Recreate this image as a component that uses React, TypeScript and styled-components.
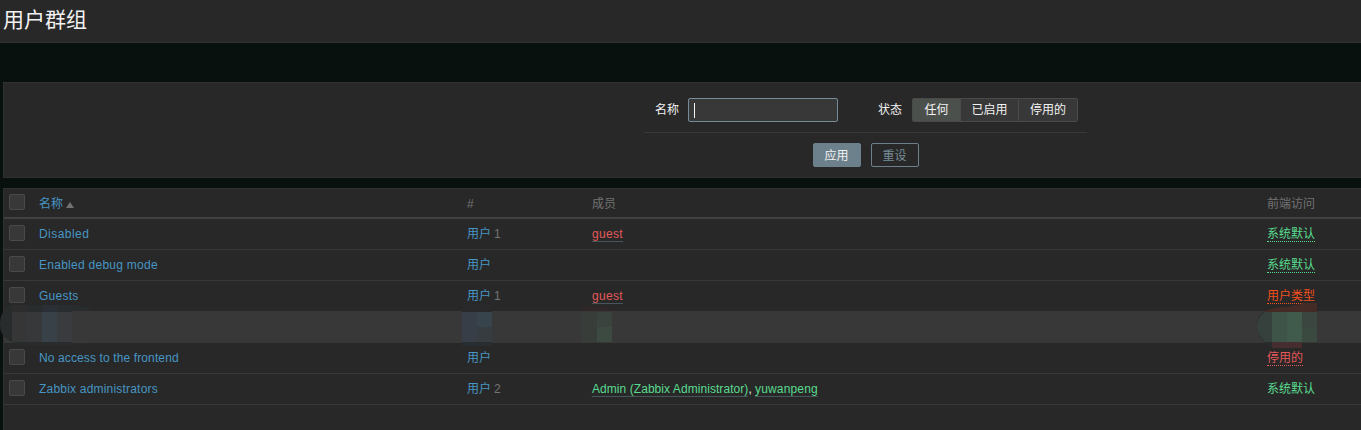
import React from 'react';
import styled, { createGlobalStyle } from 'styled-components';

const GlobalStyle = createGlobalStyle`
  * { box-sizing: border-box; }
  body {
    margin: 0;
    background: #09110f;
    color: #f2f2f2;
    font: 12px/14px "Liberation Sans", "Noto Sans CJK SC", sans-serif;
    overflow: hidden;
  }
`;

const Viewport = styled.div`
  height: 430px;
  overflow: hidden;
`;

const Page = styled.div`
  width: 1727px;
`;

const Header = styled.header`
  height: 43px;
  padding: 6px 3px;
  background: #282828;
  border-bottom: 1px solid #303030;
`;

const Title = styled.h1`
  margin: 0;
  font-size: 21px;
  font-weight: 400;
  line-height: 28px;
`;

const Filter = styled.form`
  display: flex;
  flex-direction: column;
  align-items: center;
  height: 96px;
  margin: 39px 0 0 3px;
  padding: 15px 0 0 0;
  background: #282828;
  border: solid #303030;
  border-width: 1px 0 1px 1px;
`;

const Fields = styled.div`
  display: flex;
  width: 443px;
  height: 35px;
  padding-left: 11px;
  border-bottom: 1px solid #383838;
`;

const Label = styled.span<{ $width: number }>`
  width: ${p => p.$width}px;
  line-height: 25px;
`;

const TextField = styled.div`
  width: 150px;
  height: 24px;
  margin-right: 40px;
  padding: 4px 5px;
  background: #383838;
  border: 1px solid #768d99;
  border-radius: 2px;
`;

const Caret = styled.div`
  width: 1px;
  height: 15px;
  background: #f2f2f2;
`;

const Segments = styled.div`
  display: flex;
  height: 24px;
  background: #383838;
  border: 1px solid #4a4a4a;
  border-radius: 2px;
`;

const Segment = styled.span<{ $width: number; $active?: boolean }>`
  width: ${p => p.$width}px;
  line-height: 23px;
  text-align: center;
  background: ${p => (p.$active ? '#4c504c' : 'transparent')};
  & + & { border-left: 1px solid #4a4a4a; }
`;

const Actions = styled.div`
  display: flex;
  gap: 10px;
  padding-top: 10px;
`;

const Button = styled.button<{ $primary?: boolean }>`
  width: 48px;
  height: 24px;
  padding: 1px 0 0;
  font: inherit;
  color: ${p => (p.$primary ? '#f2f2f2' : '#768d99')};
  background: ${p => (p.$primary ? '#6c818b' : 'transparent')};
  border: 1px solid ${p => (p.$primary ? '#6c818b' : '#6c818b')};
  border-radius: 2px;
`;

const Table = styled.div`
  height: 260px;
  margin: 10px 0 0 3px;
  background: #282828;
  border: solid #303030;
  border-width: 1px 0 0 1px;
`;

const Row = styled.div<{ $head?: boolean; $masked?: boolean }>`
  position: relative;
  display: grid;
  grid-template-columns: 30px 428px 125px 675px 1fr;
  height: ${p => (p.$head ? 30 : 31)}px;
  color: ${p => (p.$head ? '#737373' : '#f2f2f2')};
  background: ${p => (p.$masked ? '#383838' : 'transparent')};
  border-bottom: ${p => (p.$head ? '2px solid #414141' : '1px solid #383838')};
`;

const Cell = styled.div`
  padding: 8px 0 0 5px;
  white-space: nowrap;
`;

const Checkbox = styled.div<{ $head?: boolean }>`
  width: 16px;
  height: 16px;
  margin-top: ${p => (p.$head ? -3 : -2)}px;
  background: #383838;
  border: 1px solid #4a4a4a;
  border-radius: 2px;
`;

const Link = styled.a<{ $spacing?: number }>`
  color: #4796c4;
  letter-spacing: ${p => p.$spacing ?? 0}px;
`;

const Count = styled.span`
  margin-left: 3px;
  color: #737373;
`;

const Member = styled.a<{ $color: string; $spacing: number }>`
  display: inline-block;
  height: 15px;
  color: ${p => p.$color};
  letter-spacing: ${p => p.$spacing}px;
  border-bottom: 1px solid #48565b;
`;

const Access = styled.a<{ $color: string; $plain?: boolean }>`
  display: inline-block;
  height: 15px;
  color: ${p => p.$color};
  border-bottom: ${p => (p.$plain ? 'none' : `1px dotted ${p.$color}`)};
`;

const SortArrow = styled.span`
  display: inline-block;
  margin-left: 3px;
  border: solid transparent;
  border-width: 0 4px 6px;
  border-bottom-color: #737373;
`;

const Mosaic = styled.svg`
  position: absolute;
  left: -4px;
  top: -14px;
  width: 1361px;
  height: 54px;
`;

const RED = '#e45959';
const GREEN = '#59db8f';
const ORANGE = '#f24f1d';

type Person = { text: string; color: string; spacing: number };
type Group = {
  name: string;
  spacing: number;
  count?: number;
  members: Person[];
  access: string;
  color: string;
  plain?: boolean;
};

const guest: Person = { text: 'guest', color: RED, spacing: 0.3 };

const before: Group[] = [
  { name: 'Disabled', spacing: 0.45, count: 1, members: [guest], access: '系统默认', color: GREEN },
  { name: 'Enabled debug mode', spacing: 0.27, members: [], access: '系统默认', color: GREEN },
  { name: 'Guests', spacing: 0.25, count: 1, members: [guest], access: '用户类型', color: ORANGE },
];

const after: Group[] = [
  { name: 'No access to the frontend', spacing: 0.12, members: [], access: '停用的', color: RED },
  {
    name: 'Zabbix administrators',
    spacing: 0.2,
    count: 2,
    members: [
      { text: 'Admin (Zabbix Administrator)', color: GREEN, spacing: 0.06 },
      { text: 'yuwanpeng', color: GREEN, spacing: 0.15 },
    ],
    access: '系统默认',
    color: GREEN,
    plain: true,
  },
];

const GroupRow = ({ group }: { group: Group }) => (
  <Row>
    <Cell><Checkbox /></Cell>
    <Cell><Link $spacing={group.spacing}>{group.name}</Link></Cell>
    <Cell>
      <Link>用户</Link>
      {group.count && <Count>{group.count}</Count>}
    </Cell>
    <Cell>
      {group.members.map((m, i) => (
        <React.Fragment key={m.text}>
          {i > 0 && ', '}
          <Member $color={m.color} $spacing={m.spacing}>{m.text}</Member>
        </React.Fragment>
      ))}
    </Cell>
    <Cell><Access $color={group.color} $plain={group.plain}>{group.access}</Access></Cell>
  </Row>
);

const MaskedRow = () => (
  <Row $masked>
    <Mosaic viewBox="0 298 1361 54">
      <path d="M12 305H72Q88 306 95 311H72V343H90Q84 345 60 345H20Q0 340 0 325Q0 309 12 305Z" fill="#282c2d" />
      <g shapeRendering="crispEdges">
        <path d="M12 305H27V312H12Z" fill="#2d2d2e" />
        <path d="M42 305H57V312H42Z" fill="#2a3035" />
        <path d="M57 305H72V312H57Z" fill="#2a2d30" />
        <path d="M12 312H27V342H12Z" fill="#363636" />
        <path d="M27 312H42V342H27Z" fill="#363839" />
        <path d="M42 312H57V342H42Z" fill="#384048" />
        <path d="M57 312H72V342H57Z" fill="#393b3e" />
        <path d="M462 305H492V312H462Z" fill="#29292c" />
        <path d="M462 312H477V342H462Z" fill="#373e47" />
        <path d="M477 312H492V327H477Z" fill="#38444b" />
        <path d="M477 327H492V342H477Z" fill="#373c41" />
        <path d="M462 342H492V346H462Z" fill="#282d31" />
        <path d="M582 312H597V342H582Z" fill="#393d3a" />
        <path d="M597 312H612V327H597Z" fill="#3b433e" />
        <path d="M597 327H612V342H597Z" fill="#3c4a42" />
      </g>
      <path d="M582 307Q605 306 618 311H582Z" fill="#302828" />
      <path d="M1275 312H1257V325Q1257 343 1275 347H1287V312Z" fill="#2a2d2c" />
      <path d="M1272 312V342H1265Q1257 335 1257 326Q1257 317 1265 312Z" fill="#36403c" />
      <path d="M1257 311H1266Q1258 315 1257 322Z" fill="#383838" />
      <path d="M1257 330Q1259 338 1265 343H1257Z" fill="#383838" />
      <g shapeRendering="crispEdges">
        <path d="M1272 312H1287V342H1272Z" fill="#3f5448" />
        <path d="M1287 312H1302V342H1287Z" fill="#405b4c" />
        <path d="M1302 312H1317V327H1302Z" fill="#3a463f" />
        <path d="M1302 327H1317V342H1302Z" fill="#3b4a41" />
        <path d="M1272 342H1302V348H1272Z" fill="#452d30" />
      </g>
      <path d="M1264 312Q1272 307 1287 307L1304 303H1317V312Z" fill="#452b26" />
    </Mosaic>
  </Row>
);

export default function App() {
  return (
    <Viewport>
      <GlobalStyle />
      <Page>
        <Header><Title>用户群组</Title></Header>
        <Filter>
          <Fields>
            <Label $width={33}>名称</Label>
            <TextField><Caret /></TextField>
            <Label $width={34}>状态</Label>
            <Segments>
              <Segment $width={47} $active>任何</Segment>
              <Segment $width={58}>已启用</Segment>
              <Segment $width={59}>停用的</Segment>
            </Segments>
          </Fields>
          <Actions>
            <Button type="button" $primary>应用</Button>
            <Button type="button">重设</Button>
          </Actions>
        </Filter>
        <Table>
          <Row $head>
            <Cell><Checkbox $head /></Cell>
            <Cell><Link>名称</Link><SortArrow /></Cell>
            <Cell>#</Cell>
            <Cell>成员</Cell>
            <Cell>前端访问</Cell>
          </Row>
          {before.map(g => <GroupRow key={g.name} group={g} />)}
          <MaskedRow />
          {after.map(g => <GroupRow key={g.name} group={g} />)}
        </Table>
      </Page>
    </Viewport>
  );
}
